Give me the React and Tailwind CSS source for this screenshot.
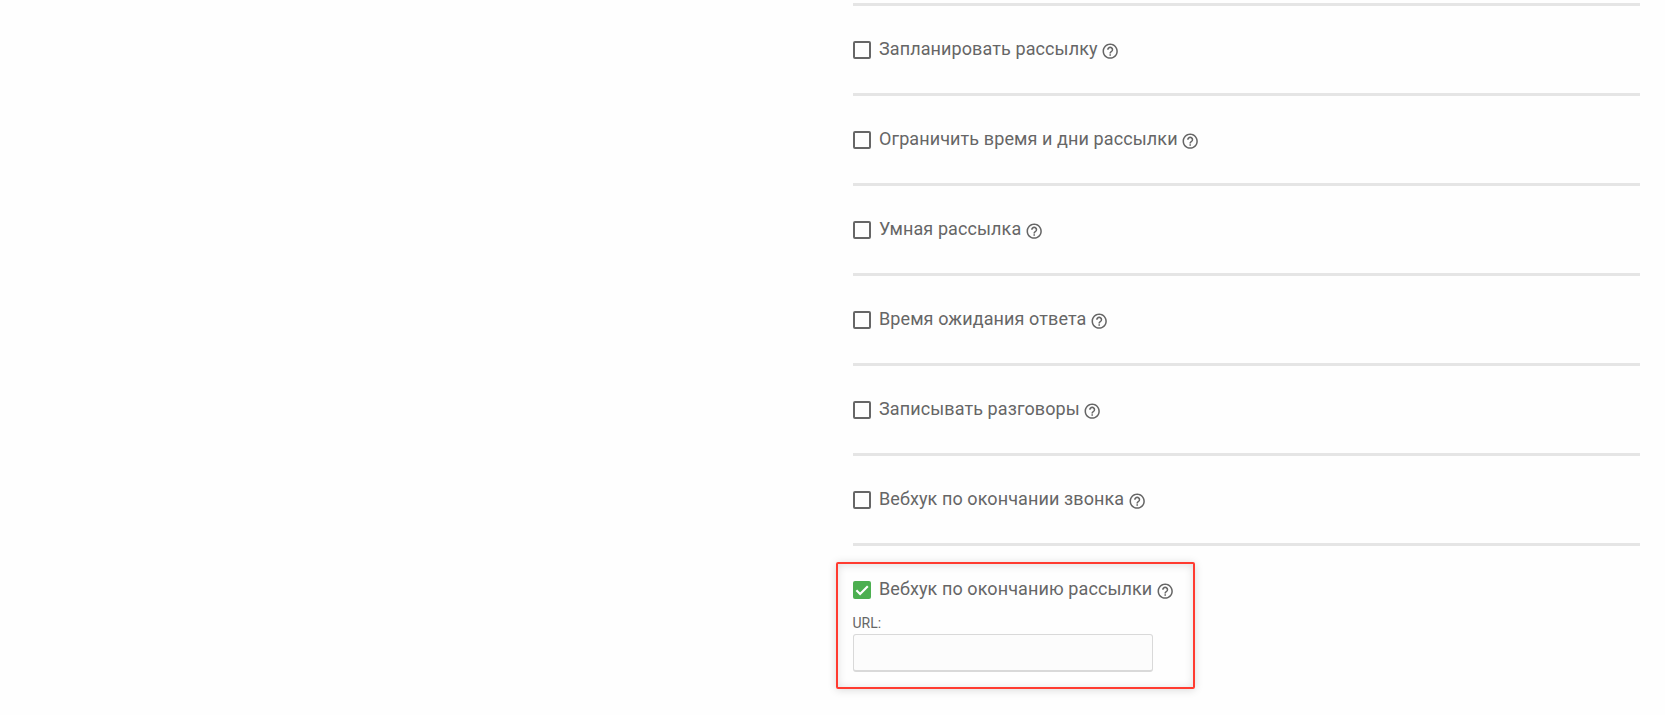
import { useState } from 'react'
import { MdHelpOutline } from 'react-icons/md'

const options = [
  { name: 'schedule', label: 'Запланировать рассылку' },
  { name: 'limit', label: 'Ограничить время и дни рассылки' },
  { name: 'smart', label: 'Умная рассылка' },
  { name: 'timeout', label: 'Время ожидания ответа' },
  { name: 'record', label: 'Записывать разговоры' },
  { name: 'callWebhook', label: 'Вебхук по окончании звонка' },
]

function Option({ name, label, checked, onChange }) {
  return (
    <label className="flex h-[18px] cursor-pointer items-center">
      <input
        type="checkbox"
        name={name}
        checked={checked}
        onChange={onChange}
        className="sr-only"
      />
      {checked ? (
        <span className="flex size-[18px] shrink-0 items-center justify-center rounded-[2px] bg-[#4caf50]">
          <svg viewBox="0 0 18 18" className="size-[18px]" fill="none">
            <path d="M3.4 9.3 7.1 13l7.7-7.8" stroke="#fff" strokeWidth="2.1" />
          </svg>
        </span>
      ) : (
        <span className="size-[18px] shrink-0 rounded-[2px] border-2 border-[#666]" />
      )}
      <span className="relative -top-px ml-2 text-[18px] leading-6 tracking-[0.1px] whitespace-nowrap">
        {label}
      </span>
      <MdHelpOutline className="relative top-[1.5px] ml-[3.5px] size-[18.4px] shrink-0" />
    </label>
  )
}

export default function App() {
  const [values, setValues] = useState({ endWebhook: true })
  const [url, setUrl] = useState('')

  const handleChange = (e) => {
    const { name, checked } = e.target
    setValues((prev) => ({ ...prev, [name]: checked }))
  }

  return (
    <div className="flex h-[715px] w-full justify-end overflow-hidden bg-[#fefefe] pt-[3px] pr-[25px] font-[Roboto,sans-serif] text-[#666]">
      <div className="w-[787px]">
        {options.map((item) => (
          <div
            key={item.name}
            className="h-[90px] border-t-[3px] border-[#e5e5e5] pt-[35px]"
          >
            <Option
              {...item}
              checked={!!values[item.name]}
              onChange={handleChange}
            />
          </div>
        ))}

        <div className="border-t-[3px] border-[#e5e5e5] pt-4">
          <div className="-ml-[17px] h-[127px] w-[359px] rounded-[2px] border-2 border-[#ff3b30] px-[15px] pt-[17px] shadow-[0_1px_8px_rgba(0,0,0,0.15),inset_0_1px_8px_rgba(0,0,0,0.13)]">
            <Option
              name="endWebhook"
              label="Вебхук по окончанию рассылки"
              checked={values.endWebhook}
              onChange={handleChange}
            />
            <div className="mt-[14px] -ml-[0.5px] text-sm leading-5">URL:</div>
            <input
              type="text"
              value={url}
              onChange={(e) => setUrl(e.target.value)}
              className="mt-px block h-[38px] w-[300px] rounded-[3px] border border-b-2 border-[#d9d9d9] bg-[#fcfcfc] px-2 outline-none"
            />
          </div>
        </div>
      </div>
    </div>
  )
}
